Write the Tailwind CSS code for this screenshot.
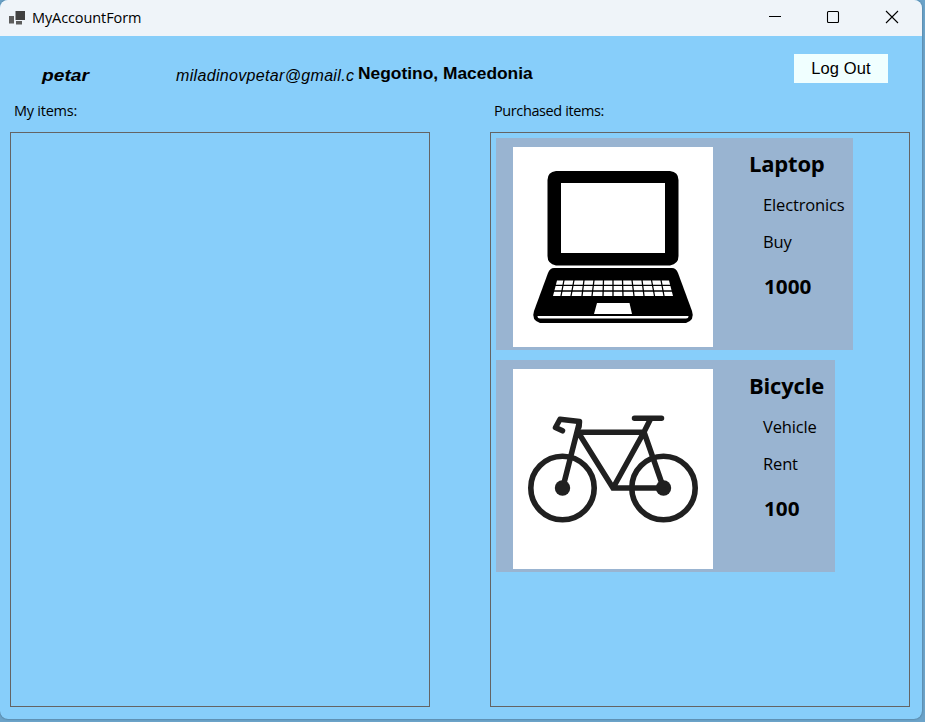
<!DOCTYPE html>
<html lang="en">
<head>
<meta charset="utf-8">
<title>MyAccountForm</title>
<script src="https://cdn.jsdelivr.net/npm/@tailwindcss/browser@4"></script>
</head>
<body class="w-[925px] h-[722px] overflow-hidden bg-[#6ba3c9] text-black font-['Open_Sans','Noto_Sans',sans-serif]">
<div class="w-[922px] h-[719px] flex flex-col rounded-[8px] overflow-hidden bg-[#87cefa] shadow-[0_0_2px_#3d6079] whitespace-nowrap">
  <header class="h-9 shrink-0 bg-[#eff4f9] flex items-center justify-between">
    <div class="flex items-center pl-[9px] gap-[7px]">
      <svg class="w-4 h-4" viewBox="0 0 16 16"><path fill="#5c5c5c" d="M0 6h5v7.500H0zM7 11h6v3.500H7z"/><path fill="#404040" d="M6.500 1H16v9H6.500z"/></svg>
      <span class="text-[14.5px] leading-5 tracking-[-0.1px]">MyAccountForm</span>
    </div>
    <svg class="w-[160px] h-9" viewBox="762 0 160 36" fill="none" stroke="#000" stroke-width="1.1"><path d="M769 16.5h12"/><rect x="827.5" y="11.5" width="11" height="11" rx="1"/><path d="M886 11l12 12M898 11l-12 12"/></svg>
  </header>
  <section class="h-[60px] shrink-0 flex font-['Liberation_Sans',sans-serif] leading-5">
    <div class="w-[176px] pl-[42px] pt-[30px] text-[17px] font-bold italic"><span class="inline-block origin-left scale-x-[1.13]">petar</span></div>
    <div class="w-[178px] mr-[4px] pt-[30px] text-[16px] italic tracking-[0.33px]">miladinovpetar@gmail.c</div>
    <div class="w-[436px] pt-[27px] text-[16.5px] font-bold"><span class="inline-block origin-left scale-x-[1.053]">Negotino, Macedonia</span></div>
    <button class="w-[94px] h-[29px] mt-[18px] bg-[#f0ffff] text-[16.5px] tracking-[0.1px] leading-[29px]">Log Out</button>
  </section>
  <main class="flex gap-[60px] pl-[10px]">
    <section class="w-[420px]">
      <h2 class="h-9 pl-1 pt-[5px] text-[14.5px] leading-5 tracking-[-0.25px]">My items:</h2>
      <div class="h-[575px] border border-[#646464]"></div>
    </section>
    <section class="w-[420px]">
      <h2 class="h-9 pl-1 pt-[5px] text-[14.5px] leading-5 tracking-[-0.4px]">Purchased items:</h2>
      <div class="h-[575px] border border-[#646464] flex flex-col items-start gap-[10px] p-[5px]">
        <article class="w-[357px] h-[212px] bg-[#99b4d1] flex pl-[17px] pt-[9px]">
          <svg class="w-[200px] h-[200px] bg-white mr-9 shrink-0" viewBox="0 0 200 200">
            <path fill-rule="evenodd" d="M43 24H157Q165.500 25 165.500 33V109Q165.500 117 157 118.500H43Q34.500 117 34.500 109V33Q34.500 25 43 24ZM48 36V106H152V36Z"/>
            <path d="M41 121H159Q163 121 165 126L179 164Q182 173 173 176H27Q18 173 21 164L35 126Q37 121 41 121Z"/>
            <path fill="#fff" d="M84 156h32.500l2.500 11H81zM24.500 169H175.500Q175.500 171.500 173 171.500H27Q24.500 171.500 24.500 169ZM44 133.500H156L160 149H40Z"/>
            <path fill="none" stroke="#000" stroke-width="1.300" d="M42 138.300H158M41 144H159M51 133l-3 16M61 133l-3 16M71 133l-2 16M81 133l-2 16M90.500 133l-.5 16M100 133v16M109.500 133l.5 16M119 133l2 16M129 133l2 16M138.500 133l3 16M148 133l3 16"/>
          </svg>
          <div class="pt-[2px]">
            <h3 class="text-[22px] leading-7 font-bold tracking-[-0.2px]">Laptop</h3>
            <p class="pl-[14px] mt-[16px] text-[16.5px] leading-6 tracking-[-0.15px]">Electronics</p>
            <p class="pl-[14px] mt-[13px] text-[16.5px] leading-6 tracking-[-0.15px]">Buy</p>
            <p class="pl-[15px] mt-[21px] text-[19px] leading-6 font-bold"><span class="inline-block origin-left scale-x-[1.09]">1000</span></p>
          </div>
        </article>
        <article class="w-[339px] h-[212px] bg-[#99b4d1] flex pl-[17px] pt-[9px]">
          <svg class="w-[200px] h-[200px] bg-white mr-9 shrink-0" viewBox="0 0 200 200" fill="none" stroke="#202020">
            <circle cx="49.500" cy="119" r="31.700" stroke-width="5.600"/><circle cx="150.500" cy="119" r="31.700" stroke-width="5.600"/>
            <g fill="#202020" stroke="none"><circle cx="49.500" cy="119" r="7.700"/><circle cx="150.500" cy="119" r="7.700"/></g>
            <path stroke-width="5.500" stroke-linecap="round" stroke-linejoin="round" d="M66 58L66.500 52.500L47 50.300L42.500 58.500L49.500 61.800M121.500 49.200H148.500"/>
            <path stroke-width="5.500" d="M50.500 116L66.500 53M66 63.300H131M65 63L100 119H151M100 119L131 63L137.500 50M131 63L150.500 119"/>
          </svg>
          <div class="pt-[2px]">
            <h3 class="text-[22px] leading-7 font-bold tracking-[-0.2px]">Bicycle</h3>
            <p class="pl-[14px] mt-[16px] text-[16.5px] leading-6 tracking-[-0.15px]">Vehicle</p>
            <p class="pl-[14px] mt-[13px] text-[16.5px] leading-6 tracking-[-0.15px]">Rent</p>
            <p class="pl-[15px] mt-[21px] text-[19px] leading-6 font-bold"><span class="inline-block origin-left scale-x-[1.09]">100</span></p>
          </div>
        </article>
      </div>
    </section>
  </main>
</div>
</body>
</html>
